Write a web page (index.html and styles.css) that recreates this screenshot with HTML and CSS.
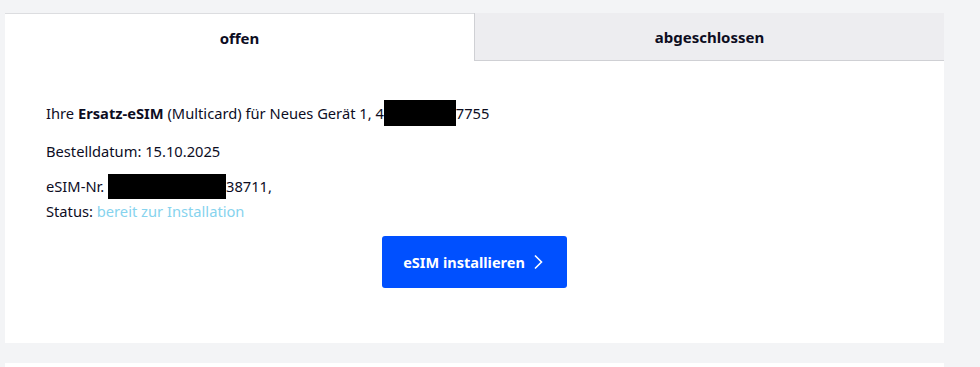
FILE: index.html
```html
<!DOCTYPE html>
<html>
<head>
  <meta charset="utf-8">
  <meta name="viewport" content="width=device-width, initial-scale=1">
  <title>Bestellungen</title>
  <link rel="stylesheet" href="styles.css">
</head>
<body>
    <div class="card">
        <div class="tabs">
            <div class="tab tab-active">offen</div>
            <div class="tab">abgeschlossen</div>
        </div>
        <div class="order">
            <p class="line">Ihre <b>Ersatz-eSIM</b> (Multicard) für Neues Gerät 1, 4<span class="redact redact-phone"></span>7755</p>
            <p class="line line-date">Bestelldatum: 15.10.2025</p>
            <p class="line line-tight">eSIM-Nr. <span class="redact redact-iccid"></span>38711,<br>Status: <span class="status">bereit zur Installation</span></p>
            <div class="actions">
                <a class="button" href="#">eSIM installieren
                    <svg class="chevron" width="10" height="16" viewBox="0 0 10 16"><path d="M2 1.5 8.5 8 2 14.5" fill="none" stroke="#fff" stroke-width="1.6"/></svg>
                </a>
            </div>
        </div>
    </div>
    <div class="card card-next"></div>
</body>
</html>
```

FILE: styles.css
```css
body {
    margin: 0;
    padding: 13px 36px 0 5px;
    background-color: #f3f4f6;
    font-family: "Noto Sans", sans-serif;
    color: #0d0d1f;
}
.card {
    background-color: #fff;
}
.card-next {
    margin-top: 20px;
    height: 4px;
}
.tabs {
    display: flex;
}
.tab {
    flex: 1;
    height: 47px;
    display: flex;
    align-items: center;
    justify-content: center;
    font-size: 15px;
    font-weight: 700;
    background-color: #ededf0;
    border-left: 1px solid #cfd0d4;
    border-bottom: 1px solid #cfd0d4;
}
.tab-active {
    background-color: #fff;
    border-left: none;
    border-bottom: none;
    border-top: 1px solid #dcdde0;
    height: 47px;
}
.order {
    padding: 39px 41px 55px;
    font-size: 14.7px;
}
.line {
    margin: 0 0 13px;
    line-height: 24px;
}
.line-date {
    margin-bottom: 11px;
}
.line-tight {
    margin-bottom: 0;
}
.redact {
    display: inline-block;
    background-color: #000;
    vertical-align: -7px;
}
.redact-phone {
    width: 72px;
    height: 26px;
}
.redact-iccid {
    width: 118px;
    height: 25px;
}
.status {
    color: #86d3ee;
}
.actions {
    display: flex;
    justify-content: center;
    margin-top: 13px;
}
.button {
    display: flex;
    align-items: center;
    gap: 8px;
    height: 52px;
    padding: 0 24px 0 21px;
    background-color: #0050ff;
    color: #fff;
    border-radius: 3px;
    font-size: 14.5px;
    font-weight: 700;
    text-decoration: none;
}
```
